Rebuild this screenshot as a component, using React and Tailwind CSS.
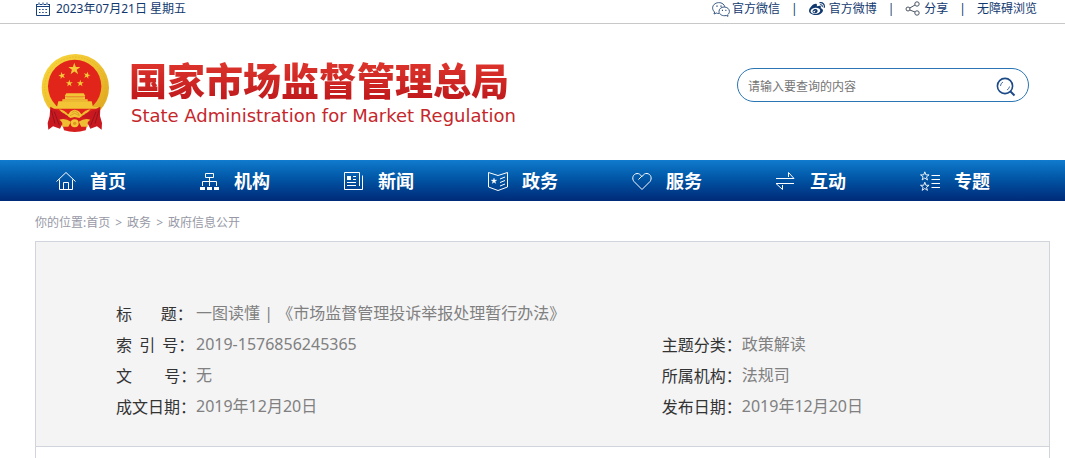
import React from "react";
import { FaWeibo } from "react-icons/fa";

const STAR = "M0,-10 L2.4,-3.2 L9.5,-3.1 L3.8,1.2 L5.9,8.1 L0,4 L-5.9,8.1 L-3.8,1.2 L-9.5,-3.1 L-2.4,-3.2 Z";

function Emblem() {
  return (
    <svg viewBox="36 26 210 237" className="h-[79px] w-[70px] shrink-0" aria-hidden="true">
      <defs>
        <linearGradient id="gold" x1="0" y1="0" x2="1" y2="1">
          <stop offset="0" stopColor="#f8d83c" />
          <stop offset="0.5" stopColor="#eec131" />
          <stop offset="1" stopColor="#dca11c" />
        </linearGradient>
      </defs>
      <circle cx="139" cy="130" r="101" fill="url(#gold)" />
      <circle cx="139" cy="130" r="92" fill="none" stroke="#d9a520" strokeWidth="2" strokeDasharray="5 4" opacity="0.6" />
      <circle cx="137" cy="126" r="80" fill="#e1251b" />
      {/* stars */}
      <g fill="#f6c737">
        <path d={STAR} transform="translate(136 74) scale(1.9)" />
        <path d={STAR} transform="translate(99 94) scale(1.1) rotate(-15)" />
        <path d={STAR} transform="translate(174 93) scale(1.1) rotate(15)" />
        <path d={STAR} transform="translate(121 117) scale(1.1)" />
        <path d={STAR} transform="translate(154 117) scale(1.1)" />
      </g>
      {/* gate tower */}
      <g fill="#f3c536">
        <path d="M112 147 H164 L169 155 H107 Z" />
        <path d="M108 156 H168 V165 H108 Z" />
        <path d="M100 165 H176 V171 H188 L192 188 H84 L88 171 H100 Z" />
      </g>
      <path d="M101 170 H176 M113 160 H163" stroke="#dca32a" strokeWidth="2" />
      <path d="M69 190 H206 L196 209 H80 Z" fill="#e1251b" />
      <path d="M68 188 H208 L205 193 H71 Z" fill="#f3c536" />
      {/* ribbons */}
      <path d="M64 187 L76 194 L102 205 L121 218 L102 235 L93 253 L72 246 L58 256 L56 236 L62 215 Z" fill="#c91820" />
      <path d="M214 187 L201 194 L175 205 L154 218 L175 235 L184 253 L204 246 L218 256 L219 236 L213 215 Z" fill="#c91820" />
      <path d="M67 198 L78 238 M76 202 L91 243 M210 198 L198 238 M201 202 L185 243" stroke="#94141b" strokeWidth="3" fill="none" />
      <path d="M95 225 L137 211 L180 225 L170 258 Q137 268 105 258 Z" fill="#d61e1d" />
      {/* wheat ears and gear */}
      <path d="M90 195 Q105 196 119 212 Q103 211 90 195 Z M185 195 Q169 196 156 212 Q172 211 185 195 Z" fill="#eebe31" />
      <path d="M117 216 Q120 198 137 196 Q155 198 158 216 L151 221 L137 218 L124 221 Z" fill="#f4c637" />
      <path d="M128 205 L137 200 L147 205 L151 214 M123 214 L137 207 L151 214" stroke="#cf8e20" strokeWidth="2" fill="none" />
      <path d="M91 226 Q108 220 126 232 L118 247 H99 Q104 234 91 226 Z M184 226 Q167 220 149 232 L157 247 H177 Q171 234 184 226 Z" fill="#efbd32" />
      <circle cx="137" cy="237" r="12" fill="#f4c637" />
      <circle cx="137" cy="237" r="5" fill="#d9981f" />
    </svg>
  );
}

function CalendarIcon() {
  return (
    <svg viewBox="0 0 14 14" className="size-[14px]" fill="none" stroke="#17407d" aria-hidden="true">
      <path d="M.5 2.5 V13.5 H13.5 V2.5 M.5 4.5 H13.5" />
      <path d="M0 2.5 H2 M4 2.5 H6 M8 2.5 H10 M12 2.5 H14 M3 .5 V3 M7 .5 V3 M11 .5 V3" />
      <path d="M3 7.5 H11 M3 10.5 H11" strokeDasharray="1.5 1.7" />
    </svg>
  );
}

function WechatIcon() {
  return (
    <svg viewBox="0 0 18 16" className="h-4 w-[18px]" fill="none" stroke="#34557f" aria-hidden="true">
      <path d="M7 12.4 C6 12.6 5 12.4 4.3 12 L2 13 L2.6 11 C.2 9 -.1 5.6 2.2 3.4 C4.5 1.2 8.6 1 11 3 C12 3.8 12.6 4.8 12.7 5.8" />
      <path d="M12.2 6 C15.2 6 17.4 8 17.4 10.4 C17.4 11.8 16.7 12.9 15.7 13.7 L16 15.3 L14.2 14.5 C10.6 15.4 7 13.4 7 10.4 C7 8 9.2 6 12.2 6 Z" />
      <path d="M4.3 5.2 H5.7 M8.3 5.2 H9.7 M9.9 9.3 H11 M13.3 9.3 H14.4" strokeWidth="1.3" />
    </svg>
  );
}

function ShareIcon() {
  return (
    <svg viewBox="0 0 15 15" className="size-[15px]" fill="none" stroke="#4b5563" aria-hidden="true">
      <circle cx="3" cy="8" r="2" />
      <circle cx="12" cy="3" r="2.2" />
      <circle cx="12" cy="12" r="2.2" />
      <path d="M4.8 7 L10 4 M4.8 9 L10 11" />
    </svg>
  );
}

function SearchIcon() {
  return (
    <svg viewBox="0 0 20 20" className="size-5" fill="none" stroke="#1c4a86" aria-hidden="true">
      <circle cx="9" cy="9" r="7.6" strokeWidth="1.6" />
      <path d="M14.5 14.5 L18.5 18.5" strokeWidth="2" />
      <path d="M4.5 9 A4.5 4.5 0 0 1 7 5 M13.5 9.5 A4.5 4.5 0 0 1 11 13" strokeWidth="0.8" />
    </svg>
  );
}

const navItems = [
  { label: "首页", icon: <path d="M.5 10.5 L10 1.5 L19.5 10.5 M3.5 8.5 V18.5 H16.5 V8.5 M7.5 18.5 V11.5 H12.5 V18.5" /> },
  {
    label: "机构",
    icon: (
      <>
        <path d="M5.5 2.5 H13.5 V6.5 H5.5 Z M9.5 6.5 V15 M2.5 15 V10.5 H16.5 V15" />
        <path d="M0 16 H5 V19 H0 Z M7 16 H12 V19 H7 Z M14 16 H19 V19 H14 Z" fill="white" stroke="none" />
      </>
    ),
  },
  {
    label: "新闻",
    icon: (
      <>
        <path d="M15.5 15 V1.5 H.5 V18.5 H18.5 V4.5 M3 11.5 H12 M3 14.5 H12 M9 5.5 H12 M9 8.5 H12" />
        <path d="M3 5 H7 V9 H3 Z" fill="white" stroke="none" />
      </>
    ),
  },
  {
    label: "政务",
    icon: (
      <>
        <path d="M.5 1.5 L10 4.5 L19.5 1.5 V16 L10 19.5 L.5 16 Z M12 8 L17 6 M12 11.5 L17 9.5 M12 15 L17 13" />
        <path d={STAR} transform="translate(6 10) scale(0.3)" fill="white" />
      </>
    ),
  },
  {
    label: "服务",
    icon: <path d="M10 18.5 L2 10.5 C-.5 7.5 1 3 5 2.5 C7.5 2.5 8 3.5 10 5.5 C12 3 13 2.3 15 2.5 C19 3 20.3 7.5 18 10.5 Z M10 5 L6.5 8.5" />,
  },
  { label: "互动", icon: <path d="M0 7.5 H18 L12.5 1.5 V6 M18 12.5 H0 L6.5 18.5 V14" /> },
  {
    label: "专题",
    icon: (
      <>
        <path d="M11.5 4.5 H20 M11.5 8.5 H20 M11.5 12.5 H20 M11.5 16.5 H20" />
        <path d={STAR} transform="translate(4.8 5.3) scale(0.45)" strokeWidth="2" />
        <path d={STAR} transform="translate(4.8 15.7) scale(0.45)" strokeWidth="2" />
      </>
    ),
  },
];

const details = [
  [{ label: "标\u00a0\u00a0\u00a0\u00a0\u00a0\u00a0\u00a0\u00a0题：", value: "一图读懂 | 《市场监督管理投诉举报处理暂行办法》" }],
  [
    { label: "索\u00a0\u00a0引\u00a0\u00a0号：", value: "2019-1576856245365" },
    { label: "主题分类：", value: "政策解读" },
  ],
  [
    { label: "文\u00a0\u00a0\u00a0\u00a0\u00a0\u00a0\u00a0\u00a0\u00a0号：", value: "无" },
    { label: "所属机构：", value: "法规司" },
  ],
  [
    { label: "成文日期：", value: "2019年12月20日" },
    { label: "发布日期：", value: "2019年12月20日" },
  ],
];

function TopBar() {
  return (
    <div className="flex items-center justify-between border-b border-[#c8c8c8] pb-1.5 pl-[36px] pr-7 text-xs leading-[17px] text-[#12396f]">
      <div className="flex items-center gap-1.5">
        <CalendarIcon />
        <span>2023年07月21日 星期五</span>
      </div>
      <div className="flex items-center gap-[11px]">
        <a href="#wechat" className="flex items-center gap-0.5">
          <WechatIcon />
          官方微信
        </a>
        <span>|</span>
        <a href="#weibo" className="flex items-center gap-1">
          <FaWeibo className="size-4" />
          官方微博
        </a>
        <span>|</span>
        <a href="#share" className="flex items-center gap-1">
          <ShareIcon />
          分享
        </a>
        <span>|</span>
        <a href="#accessible">无障碍浏览</a>
      </div>
    </div>
  );
}

export default function App() {
  return (
    <div lang="zh-CN" className="min-h-screen bg-white font-['Noto_Sans','Noto_Sans_CJK_SC',sans-serif]">
      <TopBar />

      {/* Header */}
      <header className="flex h-[136px] items-center justify-between pl-[41px] pr-9">
        <div className="flex items-center gap-[18px]">
          <Emblem />
          <div>
            <h1 className="bg-gradient-to-b from-[#e2382f] to-[#bd151b] bg-clip-text text-[38px] font-black leading-[48px] text-transparent">
              国家市场监督管理总局
            </h1>
            <p className="pl-0.5 font-['DejaVu_Sans',sans-serif] text-lg leading-6 text-[#c5272b]">
              State Administration for Market Regulation
            </p>
          </div>
        </div>
        <form className="mb-3.5 flex h-[34px] w-[292px] items-center rounded-full border border-[#2a75b3] pl-2.5 pr-3 pt-1">
          <input
            type="text"
            aria-label="请输入要查询的内容"
            placeholder="请输入要查询的内容"
            className="min-w-0 flex-1 text-xs text-gray-700 outline-none placeholder:text-[#757575]"
          />
          <button type="button" aria-label="搜索">
            <SearchIcon />
          </button>
        </form>
      </header>

      {/* Navigation */}
      <nav className="grid h-[41px] grid-cols-7 bg-gradient-to-b from-[#117bcd] to-[#002a78] pl-[56px] pr-px">
        {navItems.map((item) => (
          <a key={item.label} href="#" className="flex items-center gap-3.5 text-lg font-bold text-white">
            <svg viewBox="0 0 20 20" className="size-5" fill="none" stroke="white" aria-hidden="true">
              {item.icon}
            </svg>
            {item.label}
          </a>
        ))}
      </nav>

      <main className="pl-[35px] pr-[15px]">
        <div className="flex h-10 items-center gap-[5px] pt-1 text-xs text-[#9799a6]">
          <span>
            你的位置:<a href="#">首页</a>
          </span>
          <span>&gt;</span>
          <a href="#">政务</a>
          <span>&gt;</span>
          <a href="#">政府信息公开</a>
        </div>

        <section className="border border-[#d0d4dd] bg-[#f4f4f5] pb-6 pl-20 pt-14">
          {details.map((row) => (
            <dl key={row[0].label} className="grid grid-cols-[58.5%_1fr] text-base leading-[31px]">
              {row.map((item) => (
                <div key={item.label} className="flex">
                  <dt className="w-20 shrink-0 whitespace-nowrap font-['Noto_Sans_CJK_SC',sans-serif] text-[#333333]">
                    {item.label}
                  </dt>
                  <dd className="text-[#808080]">{item.value}</dd>
                </div>
              ))}
            </dl>
          ))}
        </section>
        <article className="h-[11px] border-x border-[#d0d4dd]" />
      </main>
    </div>
  );
}
